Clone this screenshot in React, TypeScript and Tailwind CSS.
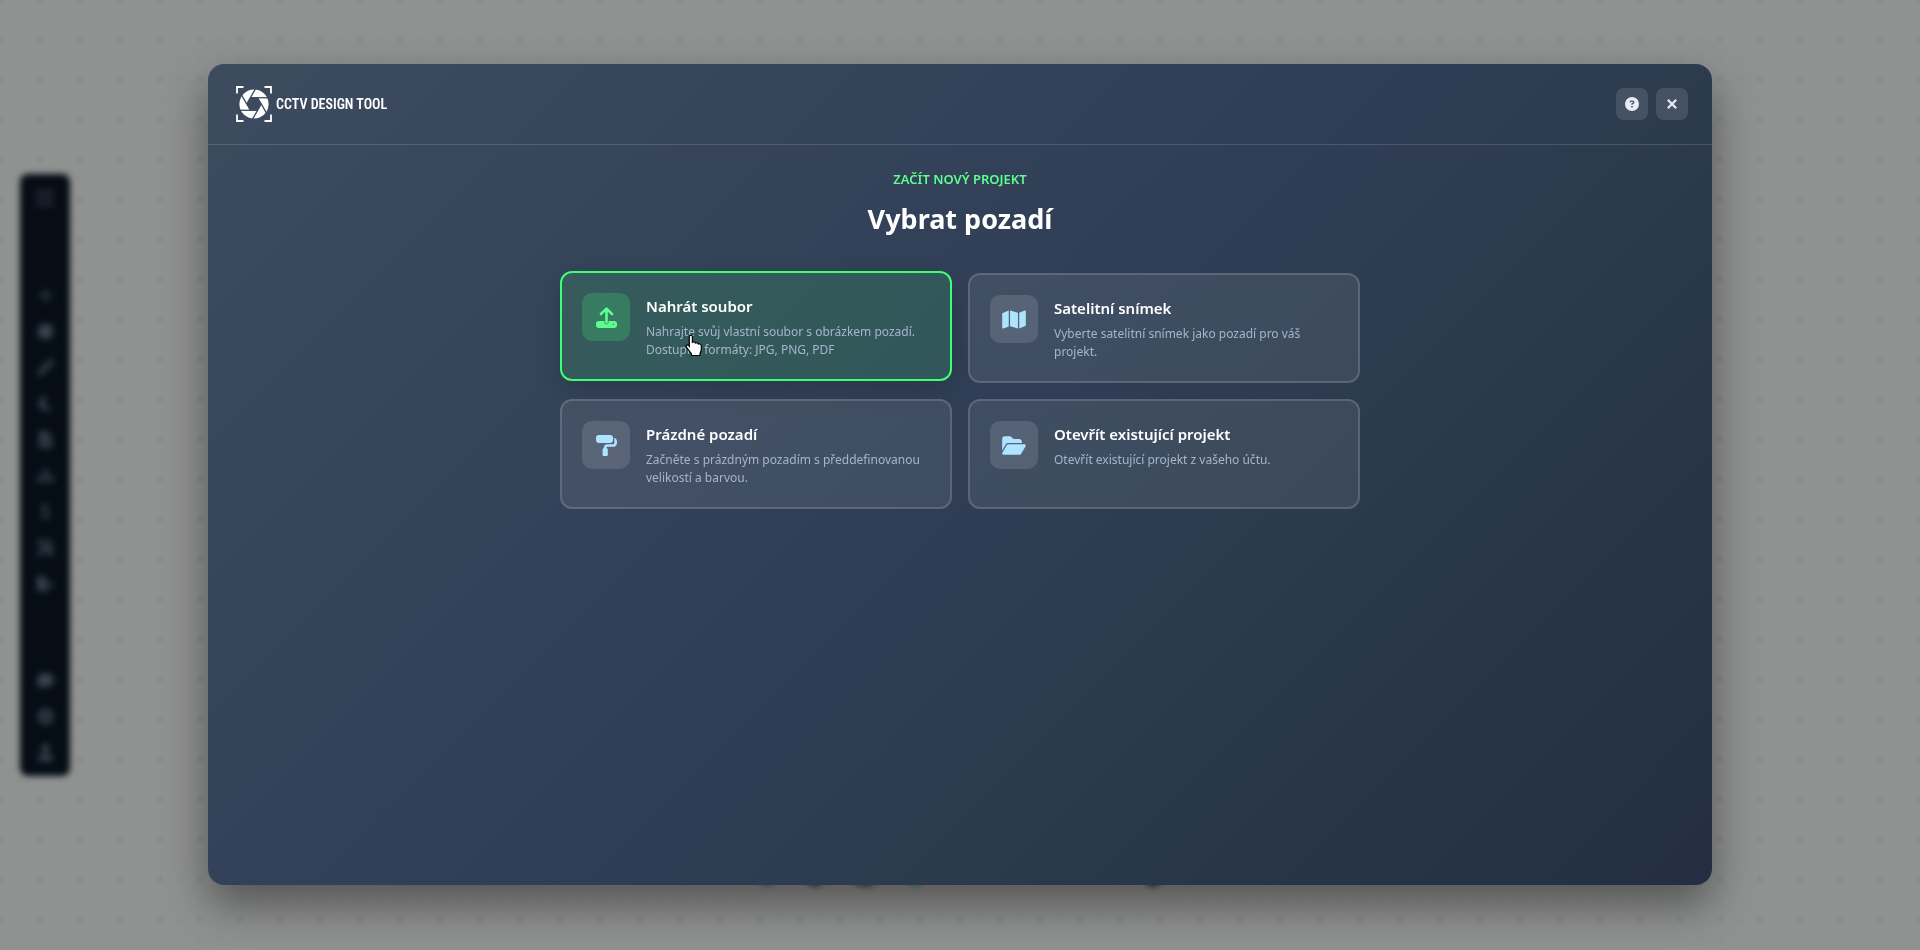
import { useState } from "react";
import type { ReactNode } from "react";
import {
  FaBars, FaPlus, FaCertificate, FaPencil, FaMoon, FaFileLines, FaSitemap, FaDollarSign,
  FaScrewdriverWrench, FaFileExport, FaComment, FaGear, FaUser, FaMap, FaPaintRoller,
  FaFolderOpen, FaCircleQuestion, FaXmark,
} from "react-icons/fa6";

const blades = [0, 60, 120, 180, 240, 300];

function ApertureLogo() {
  return (
    <svg viewBox="0 0 36 36" className="size-9" fill="none" aria-hidden="true">
      <path d="M1 7.500V1H7.500 M28.500 1H35V7.500 M35 28.500V35H28.500 M7.500 35H1V28.500" stroke="#fff" strokeWidth="1.800" />
      <mask id="aperture">
        <rect width="36" height="36" fill="#000" />
        <circle cx="18" cy="18" r="14.600" fill="#fff" />
        <path d="M14.400 11.700H21.600L25.200 18L21.600 24.300H14.400L10.800 18Z" fill="#000" />
        {blades.map((a) => (
          <path key={a} d="M14.400 11.700H33" stroke="#000" strokeWidth="1.300" transform={`rotate(${a} 18 18)`} />
        ))}
      </mask>
      <rect width="36" height="36" fill="#fff" mask="url(#aperture)" />
    </svg>
  );
}

function UploadIcon() {
  return (
    <svg viewBox="0 0 21 21" className="size-[21px]" fill="none" aria-hidden="true">
      <mask id="upload-base">
        <rect width="21" height="21" fill="#fff" />
        <path d="M10.500 10V15.600" stroke="#000" strokeWidth="4" strokeLinecap="round" />
        <circle cx="17.300" cy="17.300" r="0.700" fill="#000" />
      </mask>
      <rect y="14" width="21" height="7" rx="3" fill="currentColor" mask="url(#upload-base)" />
      <path d="M10.500 2V15.600 M5 7L10.500 1.600L16 7" stroke="currentColor" strokeWidth="2.600" strokeLinecap="round" strokeLinejoin="round" />
    </svg>
  );
}

function HandCursor() {
  return (
    <svg viewBox="0 0 18 23" className="pointer-events-none absolute top-[61px] left-[123px] h-[23px] w-[18px]" aria-hidden="true">
      <path
        d="M5 1.500C6.200 1 7.400 1.700 7.400 3V8.200C8.200 7.600 10.200 7.700 10.400 9C11.200 8.500 13 8.700 13.300 10C14.200 9.600 16.300 9.900 16.300 12V15.500C16.300 17.500 15 18.500 15 20V21.500H6.500V20C6.500 19 2.500 15.500 1.300 12.800C.5 10.900 2.800 10 4.300 12.200V3C4.300 2.200 4.500 1.700 5 1.500Z"
        fill="#fff" stroke="#000" strokeWidth="1.200"
      />
    </svg>
  );
}

type Option = { id: string; title: string; text: string; icon: ReactNode };

const options: Option[] = [
  { id: "upload", title: "Nahrát soubor", text: "Nahrajte svůj vlastní soubor s obrázkem pozadí. Dostupné formáty: JPG, PNG, PDF", icon: <UploadIcon /> },
  { id: "satellite", title: "Satelitní snímek", text: "Vyberte satelitní snímek jako pozadí pro váš projekt.", icon: <FaMap className="h-[21px] w-6" /> },
  { id: "blank", title: "Prázdné pozadí", text: "Začněte s prázdným pozadím s předdefinovanou velikostí a barvou.", icon: <FaPaintRoller className="size-[21px]" /> },
  { id: "open", title: "Otevřít existující projekt", text: "Otevřít existující projekt z vašeho účtu.", icon: <FaFolderOpen className="h-[21px] w-6" /> },
];

function OptionCard({ option, active, onSelect }: { option: Option; active: boolean; onSelect: () => void }) {
  return (
    <button
      type="button"
      onClick={onSelect}
      className={
        "relative flex min-h-[110px] items-start gap-4 rounded-xl border-2 p-5 text-left " +
        (active
          ? "-translate-y-0.5 border-[#3dff74] bg-[#3dff74]/12 shadow-[0_8px_24px_rgba(0,0,0,0.15)]"
          : "border-white/15 bg-white/8")
      }
    >
      <span
        className={
          "flex size-12 shrink-0 items-center justify-center rounded-[10px] " +
          (active ? "bg-[#3dff74]/20 text-[#5cff8f]" : "bg-white/12 text-[#aee4ff]")
        }
      >
        {option.icon}
      </span>
      <span className="flex flex-col gap-1">
        <span className="text-[15px] leading-[26px] font-semibold text-white">{option.title}</span>
        <span className="text-[12px] leading-[18px] text-[#a6b5cb]">{option.text}</span>
      </span>
      {active && <HandCursor />}
    </button>
  );
}

const drawTools = [
  { label: "Přidat", icon: <FaPlus /> },
  { label: "Zařízení", icon: <FaCertificate /> },
  { label: "Kreslit", icon: <FaPencil /> },
  { label: "Noční režim", icon: <FaMoon /> },
  { label: "Dokument", icon: <FaFileLines /> },
  { label: "Síť", icon: <FaSitemap /> },
  { label: "Cena", icon: <FaDollarSign /> },
  { label: "Nástroje", icon: <FaScrewdriverWrench /> },
  { label: "Export", icon: <FaFileExport /> },
];
const accountTools = [
  { label: "Chat", icon: <FaComment /> },
  { label: "Nastavení", icon: <FaGear /> },
  { label: "Účet", icon: <FaUser /> },
];

function ToolGroup({ tools }: { tools: { label: string; icon: ReactNode }[] }) {
  return (
    <div className="flex flex-col gap-3">
      {tools.map((t) => (
        <button key={t.label} type="button" aria-label={t.label} className="flex size-6 items-center justify-center text-[17px]">
          {t.icon}
        </button>
      ))}
    </div>
  );
}

function Workspace() {
  return (
    <div
      aria-hidden="true"
      className="flex h-screen flex-col justify-between bg-[#909291] bg-[radial-gradient(circle,rgba(0,0,0,0.045)_0,transparent_5px),radial-gradient(circle,rgba(0,0,0,0.012)_0,transparent_5px)] bg-[size:40px_40px,20px_20px] bg-[position:20px_19px,10px_9px]"
    >
      <div className="flex flex-1 items-center px-5">
        <nav className="flex h-[602px] w-[50px] flex-col items-center rounded-lg bg-[#060d15] py-3 text-[#37424e] blur-[3px]">
          <button type="button" aria-label="Menu" className="flex size-6 items-center justify-center text-[20px] text-[#303744]">
            <FaBars />
          </button>
          <div className="pt-[73px]">
            <ToolGroup tools={drawTools} />
          </div>
          <div className="mt-auto">
            <ToolGroup tools={accountTools} />
          </div>
        </nav>
      </div>
    </div>
  );
}

function BottomBar() {
  return (
    <div aria-hidden="true" className="absolute inset-x-0 bottom-11 flex justify-center blur-[3px]">
      <div className="flex h-14 w-[434px] items-center gap-8 rounded-3xl bg-[#939191] px-4">
        <span className="size-4 rounded-full bg-[#5b6164]" />
        <span className="size-4 rounded-full bg-[#2b3640]" />
        <span className="h-4 w-5 rounded-md bg-[#3b454c]" />
        <span className="size-4 rounded-full bg-[#2f8f5c]" />
        <span className="ml-auto size-4 rounded-full bg-[#172230]" />
      </div>
    </div>
  );
}

const headerButton = "flex size-8 items-center justify-center rounded-lg bg-white/12 text-[#e8edf5]";

export default function App() {
  const [selected, setSelected] = useState("upload");
  return (
    <div className="relative h-screen overflow-hidden font-['Segoe_UI','Noto_Sans',sans-serif]">
      <Workspace />
      <BottomBar />
      <div className="fixed inset-0 px-52 pt-16 pb-[65px]">
        <div
          role="dialog"
          aria-modal="true"
          aria-labelledby="dialog-title"
          className="flex h-full flex-col overflow-hidden rounded-2xl bg-linear-[135deg,#3c4b5e_0%,#2f3e55_50%,#2c3b4e_64%,#232e42_100%] shadow-[0_20px_44px_rgba(0,0,0,0.42)]"
        >
          <header className="flex items-center justify-between border-b border-white/15 px-6 py-[22px]">
            <a href="#" className="flex items-center gap-1 pl-1 text-white">
              <ApertureLogo />
              <span className="font-['Roboto_Condensed','Liberation_Sans_Narrow',Roboto,sans-serif] text-[14px] font-semibold whitespace-nowrap">CCTV DESIGN TOOL</span>
            </a>
            <div className="flex gap-2">
              <button type="button" aria-label="Nápověda" className={headerButton}>
                <FaCircleQuestion className="size-3.5" />
              </button>
              <button type="button" aria-label="Zavřít" className={headerButton}>
                <FaXmark className="size-3.5" stroke="currentColor" strokeWidth={30} />
              </button>
            </div>
          </header>
          <main className="flex flex-1 flex-col items-center px-6 pt-6">
            <p className="text-[13px] leading-5 font-semibold text-[#5cff8f] uppercase">Začít nový projekt</p>
            <h1 id="dialog-title" className="pt-3 text-[27px] leading-9 font-bold text-white">Vybrat pozadí</h1>
            <div className="grid w-full max-w-[800px] grid-cols-2 gap-4 pt-9">
              {options.map((o) => (
                <OptionCard key={o.id} option={o} active={selected === o.id} onSelect={() => setSelected(o.id)} />
              ))}
            </div>
          </main>
        </div>
      </div>
    </div>
  );
}
